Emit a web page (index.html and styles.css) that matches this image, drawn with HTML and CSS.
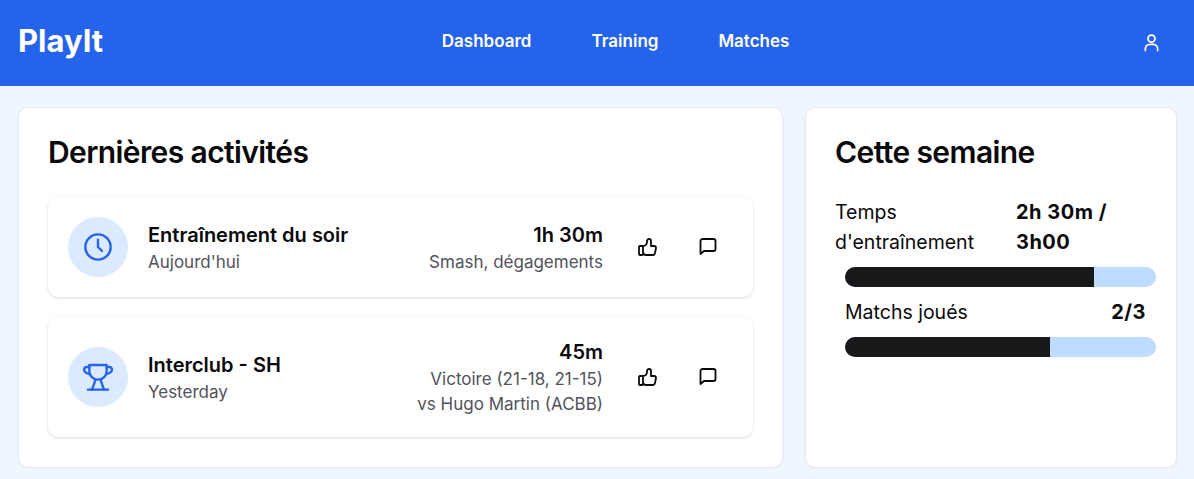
FILE: index.html
```html
<!DOCTYPE html>
<html lang="fr">

<head>
    <meta charset="UTF-8">
    <meta name="viewport" content="width=device-width, initial-scale=1.0">
    <title>PlayIt</title>
    <link rel="stylesheet" href="styles.css">
</head>

<body>
    <header class="topbar">
        <div class="logo">PlayIt</div>
        <nav class="nav">
            <a href="#">Dashboard</a>
            <a href="#">Training</a>
            <a href="#">Matches</a>
        </nav>
        <button class="user-btn" aria-label="Profile">
            <svg width="21" height="21" viewBox="0 0 24 24" fill="none" stroke="currentColor" stroke-width="2" stroke-linecap="round" stroke-linejoin="round">
                <circle cx="12" cy="7.500" r="4"></circle>
                <path d="M5 21v-2a5 5 0 0 1 5-5h4a5 5 0 0 1 5 5v2"></path>
            </svg>
        </button>
    </header>

    <main class="layout">
        <section class="card">
            <h2>Dernières activités</h2>
            <div class="activities">
                <article class="activity">
                    <div class="activity-icon">
                        <svg width="32" height="32" viewBox="0 0 24 24" fill="none" stroke="currentColor" stroke-width="1.800" stroke-linecap="round" stroke-linejoin="round">
                            <circle cx="12" cy="12" r="9.500"></circle>
                            <path d="M12 6.500V12l3 3"></path>
                        </svg>
                    </div>
                    <div class="activity-main">
                        <div class="activity-title">Entraînement du soir</div>
                        <div class="muted">Aujourd'hui</div>
                    </div>
                    <div class="activity-side">
                        <div class="activity-title">1h 30m</div>
                        <div class="muted">Smash, dégagements</div>
                    </div>
                    <div class="actions">
                        <button class="icon-btn" aria-label="Like">
                            <svg width="24" height="24" viewBox="0 0 24 24" fill="none" stroke="currentColor" stroke-width="1.800" stroke-linecap="round" stroke-linejoin="round">
                                <path d="M7 11v8a1 1 0 0 1-1 1H4a1 1 0 0 1-1-1v-7a1 1 0 0 1 1-1h3a4 4 0 0 0 4-4V6a2 2 0 0 1 4 0v5h3a2 2 0 0 1 2 2l-1 5a2 3 0 0 1-2 2h-7a3 3 0 0 1-3-3"></path>
                            </svg>
                        </button>
                        <button class="icon-btn" aria-label="Comment">
                            <svg width="24" height="24" viewBox="0 0 24 24" fill="none" stroke="currentColor" stroke-width="1.800" stroke-linecap="round" stroke-linejoin="round">
                                <path d="M4.500 19V6a2 2 0 0 1 2-2h11a2 2 0 0 1 2 2v8a2 2 0 0 1-2 2H8z"></path>
                            </svg>
                        </button>
                    </div>
                </article>

                <article class="activity">
                    <div class="activity-icon">
                        <svg width="32" height="32" viewBox="0 0 24 24" fill="none" stroke="currentColor" stroke-width="1.800" stroke-linecap="round" stroke-linejoin="round">
                            <path d="M4.500 21.500h15"></path>
                            <path d="M5.500 3h13v4.500a6.500 6.500 0 0 1-13 0z"></path>
                            <path d="M5.500 4.500H3.500a2 2 0 0 0-1.500 3.300c.8 1 2 1.700 3.800 2"></path>
                            <path d="M18.500 4.500h2a2 2 0 0 1 1.500 3.300c-.8 1-2 1.700-3.800 2"></path>
                            <path d="M10 14.500l-2.500 7"></path>
                            <path d="M14 14.500l2.500 7"></path>
                        </svg>
                    </div>
                    <div class="activity-main">
                        <div class="activity-title">Interclub - SH</div>
                        <div class="muted">Yesterday</div>
                    </div>
                    <div class="activity-side">
                        <div class="activity-title">45m</div>
                        <div class="muted">Victoire (21-18, 21-15)</div>
                        <div class="muted">vs Hugo Martin (ACBB)</div>
                    </div>
                    <div class="actions">
                        <button class="icon-btn" aria-label="Like">
                            <svg width="24" height="24" viewBox="0 0 24 24" fill="none" stroke="currentColor" stroke-width="1.800" stroke-linecap="round" stroke-linejoin="round">
                                <path d="M7 11v8a1 1 0 0 1-1 1H4a1 1 0 0 1-1-1v-7a1 1 0 0 1 1-1h3a4 4 0 0 0 4-4V6a2 2 0 0 1 4 0v5h3a2 2 0 0 1 2 2l-1 5a2 3 0 0 1-2 2h-7a3 3 0 0 1-3-3"></path>
                            </svg>
                        </button>
                        <button class="icon-btn" aria-label="Comment">
                            <svg width="24" height="24" viewBox="0 0 24 24" fill="none" stroke="currentColor" stroke-width="1.800" stroke-linecap="round" stroke-linejoin="round">
                                <path d="M4.500 19V6a2 2 0 0 1 2-2h11a2 2 0 0 1 2 2v8a2 2 0 0 1-2 2H8z"></path>
                            </svg>
                        </button>
                    </div>
                </article>
            </div>
        </section>

        <aside class="card">
            <h2>Cette semaine</h2>
            <div class="stats">
                <div class="stat-row stat-row-wide">
                    <span class="stat-label">Temps d'entraînement</span>
                    <span class="stat-value">2h 30m / 3h00</span>
                </div>
                <div class="bar"><div class="bar-fill" style="width: 80%"></div></div>
                <div class="stat-row">
                    <span>Matchs joués</span>
                    <span class="stat-value">2/3</span>
                </div>
                <div class="bar"><div class="bar-fill" style="width: 66%"></div></div>
            </div>
        </aside>
    </main>
</body>

</html>
```

FILE: styles.css
```css
* {
    margin: 0;
    padding: 0;
    box-sizing: border-box;
}

body {
    background-color: #eff6ff;
    color: #09090b;
    font-family: "Inter", "Liberation Sans", sans-serif;
    font-size: 19.5px;
    line-height: 30px;
}

.topbar {
    height: 86px;
    padding: 0 18px 4px;
    display: flex;
    align-items: center;
    justify-content: space-between;
    background-color: #2563eb;
    color: white;
}

.logo {
    font-size: 31px;
    font-weight: 700;
}

.nav {
    display: flex;
    gap: 60px;
}

.nav a {
    color: white;
    font-size: 17px;
    font-weight: 600;
    text-decoration: none;
}

.user-btn,
.icon-btn {
    border: none;
    background: none;
    color: inherit;
    display: flex;
    align-items: center;
    justify-content: center;
}

.user-btn {
    width: 48px;
    height: 40px;
    margin-top: 2px;
}

.layout {
    display: grid;
    grid-template-columns: 1fr 372px;
    gap: 22px;
    padding: 21px 17px 0 18px;
}

.card {
    height: 361px;
    padding: 30px 29px;
    border: 1px solid #e8e9ee;
    border-radius: 10px;
    background-color: white;
    box-shadow: 0 1px 2px rgba(0, 0, 0, 0.05);
}

h2 {
    font-size: 30px;
    line-height: 28px;
    font-weight: 600;
    letter-spacing: -0.6px;
    margin-bottom: 31px;
}

.activities {
    display: flex;
    flex-direction: column;
    gap: 20px;
}

.activity {
    display: flex;
    align-items: center;
    gap: 20px;
    padding: 20px;
    border-radius: 10px;
    box-shadow: 0 1px 3px rgba(0, 0, 0, 0.15);
}

.activity-icon {
    width: 60px;
    height: 60px;
    flex-shrink: 0;
    display: flex;
    align-items: center;
    justify-content: center;
    border-radius: 50%;
    background-color: #dbeafe;
    color: #2563eb;
}

.activity-main {
    flex: 1;
}

.activity-side {
    text-align: right;
}

.activity-title {
    font-size: 20px;
    font-weight: 600;
    line-height: 30px;
}

.muted {
    color: #52525b;
    font-size: 17px;
    line-height: 25px;
}

.actions {
    display: flex;
    gap: 10px;
}

.icon-btn {
    width: 50px;
    height: 40px;
    color: #09090b;
}

.stats {
    display: flex;
    flex-direction: column;
}

.stat-row {
    display: flex;
    justify-content: space-between;
    margin: 10px 1px 10px 10px;
}

.stat-row-wide {
    margin: 0 1px 10px 0;
}

.stat-label {
    width: 181px;
}

.stat-value {
    font-size: 20px;
    font-weight: 700;
    letter-spacing: 0.5px;
}

.stat-row-wide .stat-value {
    width: 130px;
}

.bar {
    height: 20px;
    margin: 0 -9px 0 10px;
    border-radius: 10px;
    overflow: hidden;
    background-color: #bfdbfe;
}

.bar-fill {
    height: 100%;
    background-color: #18181b;
}
```
